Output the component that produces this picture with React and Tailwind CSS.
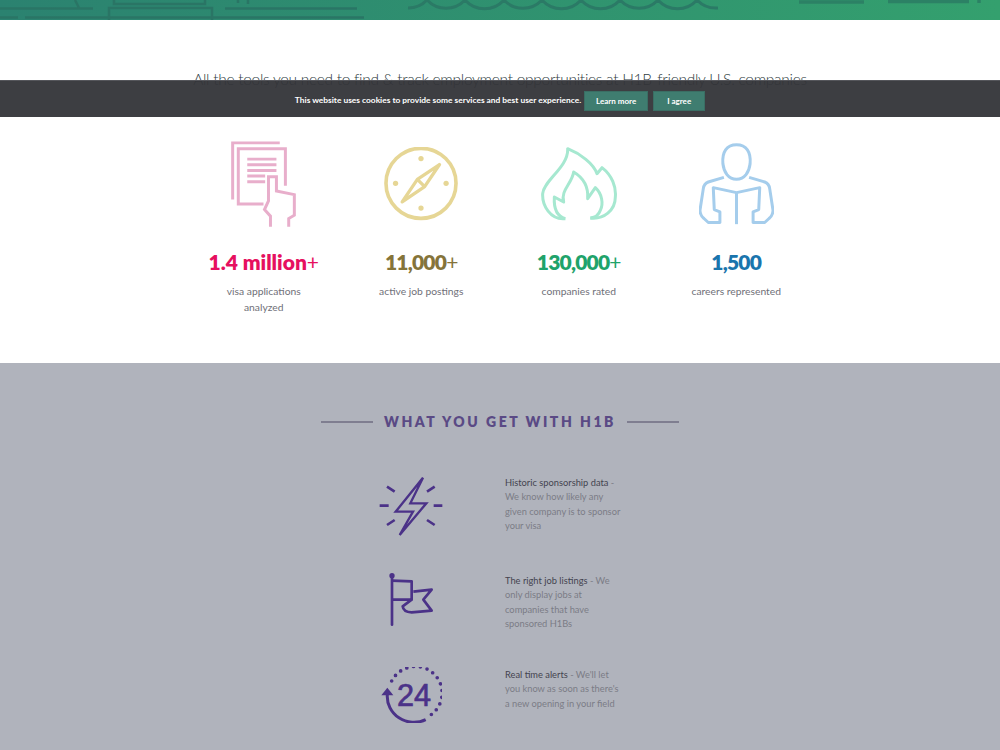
const font = { fontFamily: '"Lato", "Liberation Sans", sans-serif' };

const DocIcon = () => (
  <svg width="66" height="89" viewBox="94 30 199 265" fill="none" stroke="#e8aecb" strokeWidth="9">
    <path d="M99 208V37H241" />
    <path d="M258 166V55H116V221H192" />
    <path d="M143 86H231M143 103H231M143 120H231M143 137H197M143 154H197" />
    <path d="M213 290V258L195 238L207 212V139H231V182L285 193V255L268 265V290" />
  </svg>
);

const CompassIcon = () => (
  <svg width="74" height="74" viewBox="553 52 224 224" fill="none" stroke="#e6d695">
    <circle cx="665" cy="162" r="106" strokeWidth="11" />
    <g fill="#e6d695" stroke="none">
      <circle cx="665" cy="87" r="8" />
      <circle cx="665" cy="237" r="8" />
      <circle cx="588" cy="162" r="8" />
      <circle cx="741" cy="162" r="8" />
    </g>
    <path d="M721 105L654 150L608 218L676 172ZM654 150L676 172" strokeWidth="10" strokeLinejoin="round" />
  </svg>
);

const FlameIcon = () => (
  <svg width="76" height="74" viewBox="122 50 228 222" fill="none" stroke="#a6e8d0" strokeWidth="9" strokeLinejoin="round">
    <path d="M195 265C150 270 125 225 127 190C130 150 205 110 202 55C240 70 280 100 290 130L305 112C335 135 348 170 345 200C345 240 310 268 270 263" />
    <path d="M195 265C170 258 160 235 162 200L190 215C180 180 215 160 220 125C245 140 265 165 262 205L285 172C305 190 310 220 300 240C295 255 285 262 270 263" />
  </svg>
);

const ReaderIcon = () => (
  <svg width="75" height="82" viewBox="597 38 226 246" fill="none" stroke="#a5cdec" strokeWidth="9" strokeLinejoin="round">
    <path d="M710 147C685 147 672 125 669 100C666 65 680 43 710 43C740 43 754 65 751 100C748 125 735 147 710 147Z" />
    <path d="M672 141L625 155Q612 160 610 175L600 240Q600 255 612 265L625 277H660V245L643 238L640 172L710 187L780 172L777 238L760 245V277H795L808 265Q820 255 820 240L810 175Q808 160 795 155L748 141" />
    <path d="M710 187V282" />
  </svg>
);

const BoltIcon = () => (
  <svg width="64" height="60" viewBox="56 36 192 180" fill="none" stroke="#4b3288" strokeWidth="8">
    <path d="M188 38L106 140H158L118 210L198 115H150Z" strokeWidth="7" />
    <path d="M80 65L103 80M223 65L200 80M58 122H85M220 122H246M80 180L103 165M223 180L200 165" />
  </svg>
);

const FlagIcon = () => (
  <svg width="46" height="54" viewBox="84 325 138 162" fill="none" stroke="#4b3288" strokeWidth="8" strokeLinejoin="round">
    <circle cx="96" cy="333" r="8" fill="#4b3288" stroke="none" />
    <path d="M96 335V480" strokeLinecap="round" />
    <path d="M96 348L155 350V405H96" />
    <path d="M160 381L215 375L190 405L215 438L155 443Q130 442 128 425L155 405" />
  </svg>
);

const AlertIcon = () => (
  <svg width="62" height="56" viewBox="60 78 186 168" fill="none" stroke="#4b3288">
    <path d="M82 160A80 78 0 0 0 197 236" strokeWidth="9" />
    <path d="M82 140L64 163H100Z" fill="#4b3288" stroke="none" />
    <path d="M95 120A80 80 0 1 1 212 222" strokeWidth="11" strokeLinecap="round" strokeDasharray="0 20.5" />
    <text x="162" y="195" textAnchor="middle" fontSize="92" fill="#4b3288" stroke="#4b3288" strokeWidth="2" style={{ fontFamily: '"Liberation Sans", sans-serif' }}>24</text>
  </svg>
);

// the dark pattern printed on the green band
const BandPattern = () => (
  <svg className="absolute inset-0" width="1000" height="20" fill="none" stroke="#2a7565" strokeWidth="2.5">
    <path d="M0 8.5H93M75 0L79 8M109 20V8H212V20M114 0V4H205V0M225 8.5H357M25 17.5H364M0 17.5H18M238 0V3M248 0V4" />
    <path d="M408 8A26 26 0 0 0 427 0A26 26 0 0 0 465 0A26 26 0 0 0 504 0A26 26 0 0 0 542 0A26 26 0 0 0 581 0A26 26 0 0 0 620 0A26 26 0 0 0 658 0A26 26 0 0 0 697 0A26 26 0 0 0 718 8" strokeWidth="3" stroke="#2b7a66" />
    <path d="M799 2H864M888 1.5H969M979 0V3" strokeWidth="3.5" stroke="#2c8165" />
  </svg>
);

const stats = [
  { icon: <DocIcon />, value: "1.4 million", plus: true, color: "text-[#e6105f]", label: "visa applications analyzed", track: "" },
  { icon: <CompassIcon />, value: "11,000", plus: true, color: "text-[#85743a]", label: "active job postings", track: "tracking-[-0.8px]" },
  { icon: <FlameIcon />, value: "130,000", plus: true, color: "text-[#1fa36b]", label: "companies rated", track: "tracking-[-0.8px]" },
  { icon: <ReaderIcon />, value: "1,500", plus: false, color: "text-[#1a75ad]", label: "careers represented", track: "tracking-[-0.8px]" },
];

const features = [
  { icon: <BoltIcon />, title: "Historic sponsorship data", text: " - We know how likely any given company is to sponsor your visa", row: "h-[61px] mb-[37px]", pad: "pt-[2px]" },
  { icon: <FlagIcon />, title: "The right job listings", text: " - We only display jobs at companies that have sponsored H1Bs", row: "h-[57px] mb-[37px]", pad: "" },
  { icon: <AlertIcon />, title: "Real time alerts", text: " - We'll let you know as soon as there's a new opening in your field", row: "h-[57px]", pad: "" },
];

export default function App() {
  return (
    <div className="relative h-[750px] overflow-hidden bg-white" style={font}>
      <div className="relative h-5 bg-gradient-to-r from-[#2b8270] to-[#34a06e]">
        <BandPattern />
      </div>

      <section className="h-[343px] pt-[49px]">
        <p className="text-center text-[15.5px] leading-5 font-light tracking-[-0.28px] text-[#2f3c41]">
          All the tools you need to find &amp; track employment opportunities at H1B-friendly U.S. companies
        </p>
        <div className="mx-auto mt-[50px] grid w-[630px] grid-cols-4">
          {stats.map((s) => (
            <div key={s.value} className="flex flex-col items-center">
              <div className="flex h-[90px] items-center justify-center">{s.icon}</div>
              <div className={`mt-[19px] text-[21px] leading-7 font-extrabold ${s.track} ${s.color}`}>
                {s.value}
                {s.plus && <span className="font-normal">+</span>}
              </div>
              <p className="mt-[7px] w-[100px] text-center text-[10.3px] leading-4 text-[#6f7078]">{s.label}</p>
            </div>
          ))}
        </div>
      </section>

      <section className="h-[387px] bg-[#b0b3bc] pt-[48px]">
        <div className="flex items-center justify-center gap-[11px]">
          <div className="h-[2px] w-[52px] bg-[#7f7e90]" />
          <h2 className="text-[14px] leading-[22px] font-extrabold tracking-[0.18em] text-[#5a4a85]">WHAT YOU GET WITH H1B</h2>
          <div className="h-[2px] w-[52px] bg-[#7f7e90]" />
        </div>
        <div className="mx-auto mt-[42px] w-[260px]">
          {features.map((f) => (
            <div key={f.title} className={`flex items-start ${f.row}`}>
              <div className={`flex w-[82px] shrink-0 justify-center ${f.pad}`}>{f.icon}</div>
              <p className="ml-[53px] w-[120px] pt-[1px] text-[9.3px] leading-[14.3px] text-[#7b7c86]">
                <span className="text-[#44434f]">{f.title}</span>
                {f.text}
              </p>
            </div>
          ))}
        </div>
      </section>

      {/* cookie bar sits over the page */}
      <div className="absolute top-[80px] left-0 flex h-[37px] w-full items-center justify-center border-t border-[#55565b] bg-[#333438]/95 pt-[3px]">
        <span className="text-[8.4px] font-bold text-white">This website uses cookies to provide some services and best user experience.</span>
        <button className="ml-[3px] h-[20px] w-[64px] border border-[#3a6e64] bg-[#3f7d70] text-[8px] font-bold text-white">Learn more</button>
        <button className="ml-[5px] h-[20px] w-[52px] border border-[#3a6e64] bg-[#3f7d70] text-[8px] font-bold text-white">I agree</button>
      </div>
    </div>
  );
}
